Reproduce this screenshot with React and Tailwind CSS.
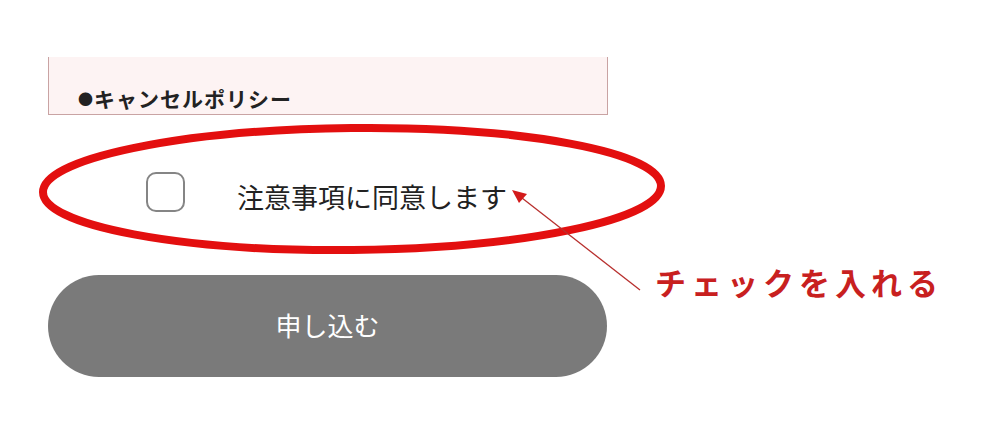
import React from 'react';

const jp = { fontFamily: '"Noto Sans CJK JP", "Noto Sans", sans-serif' };

const App = () => {
  return (
    <div className="relative w-[997px] h-[442px] bg-white overflow-hidden" style={jp}>
      {/* Form */}
      <div className="pl-[48px] w-[608px]">
        {/* Notes box (scrolled) */}
        <div className="mt-[57px] h-[58px] bg-[#fdf3f3] border-x border-b border-[#c9a3a3] flex items-end pl-[29px] pb-[1px]">
          <p className="text-[21px] font-bold text-[#222] leading-[28px] tracking-[1px]">
            <span className="text-[15px] align-[2px]">●</span>キャンセルポリシー
          </p>
        </div>

        {/* Agreement */}
        <label className="mt-[56px] h-[42px] flex items-center pl-[98px]">
          <span className="w-[39px] h-[40px] rounded-[10px] border-[2.5px] border-[#858585] bg-white shrink-0" />
          <span className="ml-[52px] mt-[8px] text-[27px] text-[#222] leading-none">注意事項に同意します</span>
        </label>

        {/* Submit */}
        <button className="mt-[62px] w-[559px] h-[102px] rounded-full bg-[#7a7a7a] text-white text-[26px] flex items-center justify-center pb-[4px]">
          申し込む
        </button>
      </div>

      {/* Annotation overlay */}
      <svg className="absolute inset-0 pointer-events-none" width="997" height="442" viewBox="0 0 997 442">
        <ellipse cx="352" cy="189" rx="309" ry="61" fill="none" stroke="#e30f0f" strokeWidth="8" transform="rotate(-0.6 352 189)" />
        <line x1="640" y1="290" x2="522" y2="198" stroke="#b8302e" strokeWidth="1.3" />
        <polygon points="512,190 527,194 519,203" fill="#d31a1a" />
      </svg>
      <div className="absolute left-[655px] top-[266px] text-[31px] font-bold text-[#c8201f] tracking-[5px] leading-none">
        チェックを入れる
      </div>
    </div>
  );
};

export default App;
